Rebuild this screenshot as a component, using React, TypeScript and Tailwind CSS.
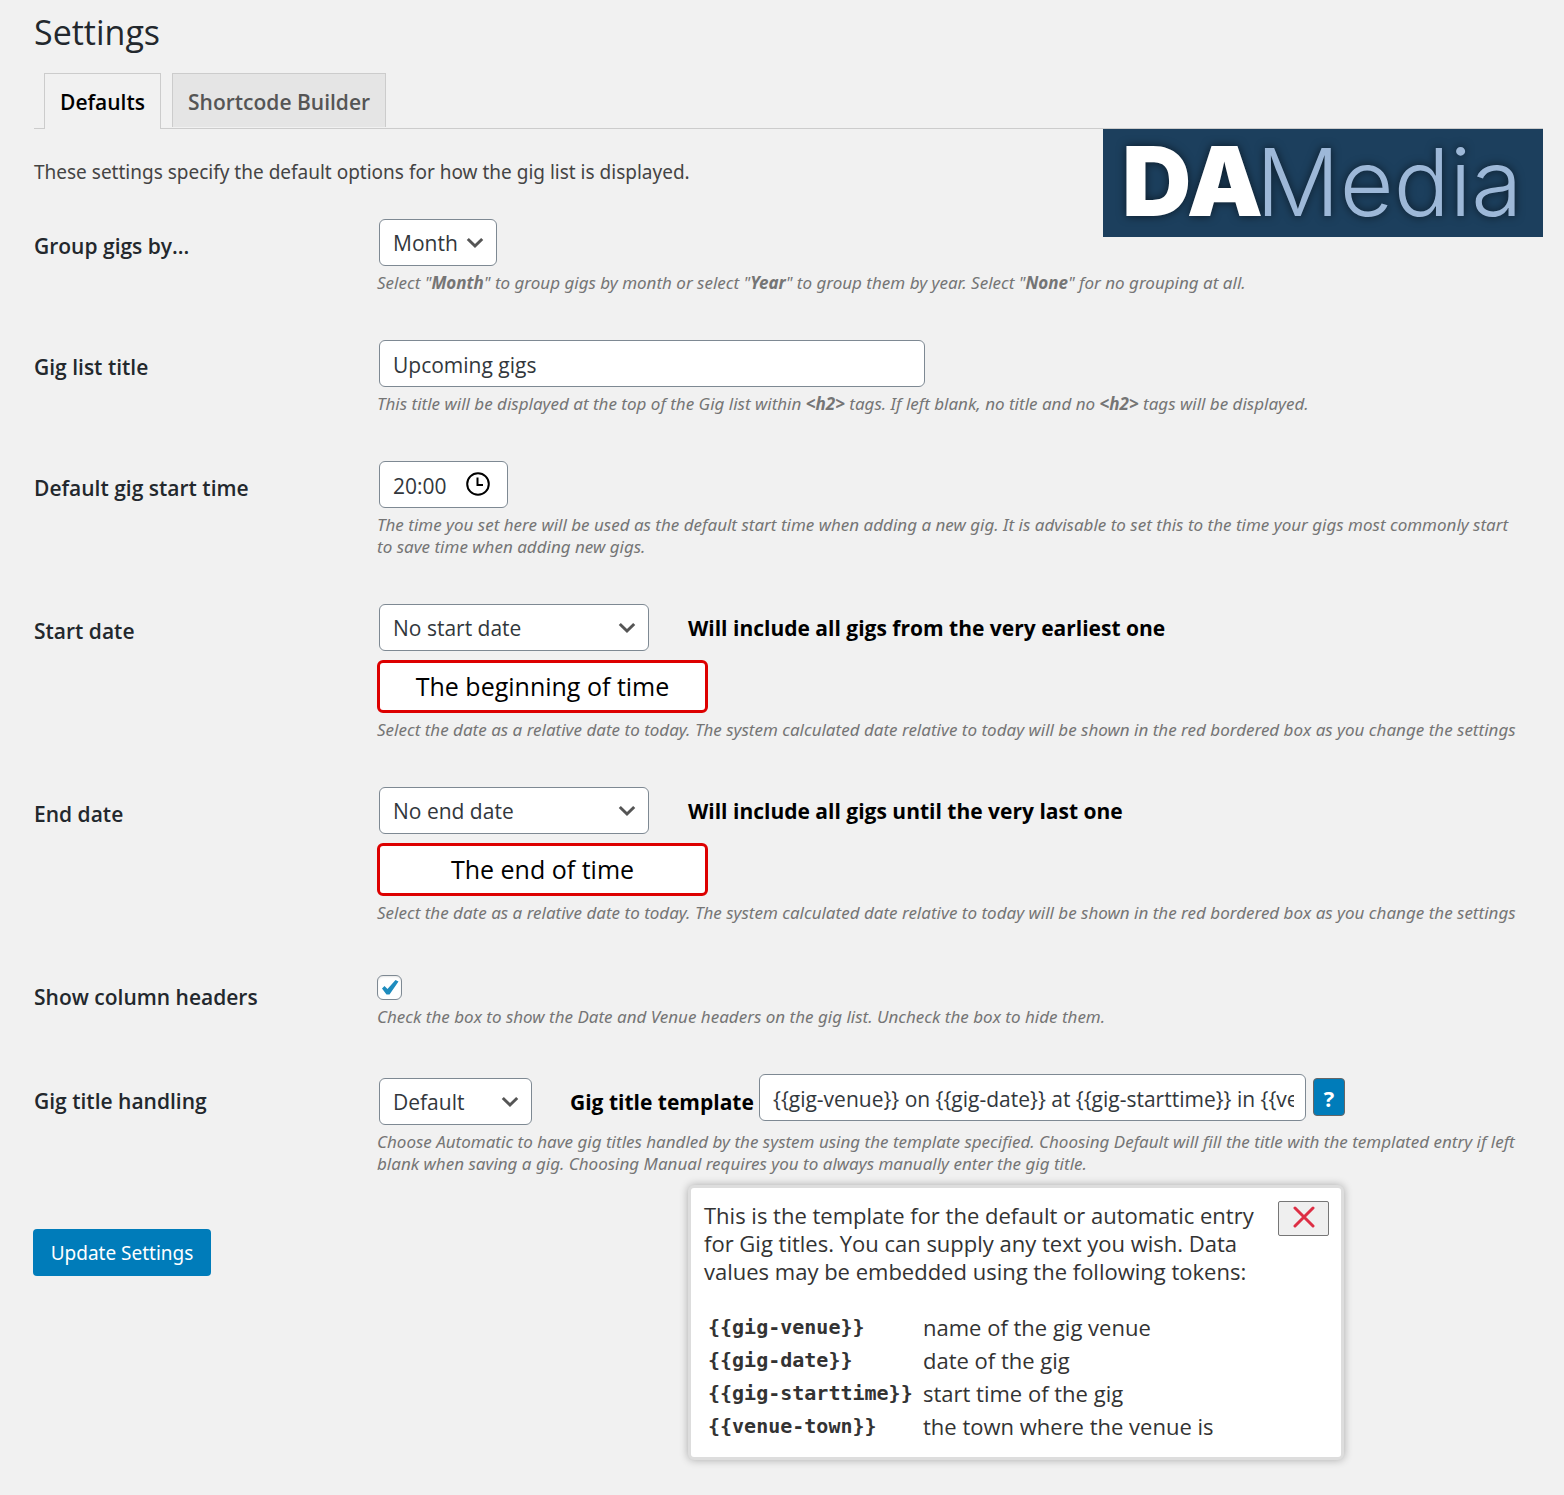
import type { ReactNode } from 'react';

const tokens = [
  { token: '{{gig-venue}}', text: 'name of the gig venue' },
  { token: '{{gig-date}}', text: 'date of the gig' },
  { token: '{{gig-starttime}}', text: 'start time of the gig' },
  { token: '{{venue-town}}', text: 'the town where the venue is' },
];

const fieldClass =
  'h-[47px] rounded-md border border-[#7e8993] bg-white pt-[2px] pr-[11px] pl-[13px] text-[21px] text-[#32373c]';

function Row({ id, label, children }: { id: string; label: string; children: ReactNode }) {
  return (
    <div className="mb-[46px] grid grid-cols-[343px_minmax(0,1fr)]">
      <label htmlFor={id} className="pt-3 text-[21px] leading-[30px] font-semibold">
        {label}
      </label>
      <div>{children}</div>
    </div>
  );
}

function Description({ children }: { children: ReactNode }) {
  return (
    <p className="mt-[6px] pr-5 font-['Noto_Sans',sans-serif] text-[17px] leading-[22px] text-[#757575] italic">
      {children}
    </p>
  );
}

function Select({ id, options, width }: { id: string; options: string[]; width: string }) {
  return (
    <div className={`relative ml-[2px] ${width}`}>
      <select id={id} className={`${fieldClass} w-full appearance-none`}>
        {options.map((option) => (
          <option key={option}>{option}</option>
        ))}
      </select>
      <svg
        aria-hidden
        viewBox="0 0 18 12"
        className="pointer-events-none absolute top-[18px] right-[13px] h-3 w-[18px]"
      >
        <path d="M1.8 2 L9 9 L16.2 2" fill="none" stroke="#555" strokeWidth="3" />
      </svg>
    </div>
  );
}

function DateBox({ id, children }: { id: string; children: ReactNode }) {
  return (
    <output
      htmlFor={id}
      className="mt-[9px] block h-[53px] w-[331px] rounded-md border-3 border-[#dd0000] bg-white text-center text-[25px] leading-[46px] text-black"
    >
      {children}
    </output>
  );
}

function Logo() {
  return (
    <svg
      role="img"
      aria-label="DAMedia"
      viewBox="0 0 440 108"
      className="absolute top-full right-0 mt-px h-[108px] w-[440px] overflow-visible bg-[#1c3f5d]"
    >
      <g
        fontFamily="Inter, sans-serif"
        className="drop-shadow-[0_0_5px_rgba(0,0,0,0.6)]"
      >
        <text x="19" y="87" fontSize="96" fontWeight="900" fill="#fff">
          DA
        </text>
        <text x="153" y="87" fontSize="93" fontWeight="300" fill="#9db8d8">
          Media
        </text>
      </g>
    </svg>
  );
}

function TemplateHelp() {
  return (
    <div className="absolute top-[111px] left-[311px] w-[656px] rounded-md border-3 border-[#ddd] bg-white px-3 pt-[13px] pb-[14px] text-[22px] text-[#333] shadow-[0_0_8px_rgba(0,0,0,0.3)]">
      <div className="flex items-start justify-between pl-px">
        <p className="w-[560px] leading-7">
          This is the template for the default or automatic entry for Gig titles. You can supply any
          text you wish. Data values may be embedded using the following tokens:
        </p>
        <button
          type="button"
          aria-label="Close"
          className="flex h-[35px] w-[51px] items-center justify-center rounded-xs border border-[#767676] bg-[#efefef]"
        >
          <svg viewBox="0 0 22 22" className="mb-[3px] h-[22px] w-[22px]">
            <path
              d="M2 2 L20 20 M20 2 L2 20"
              stroke="#dd2e44"
              strokeWidth="3"
              strokeLinecap="round"
            />
          </svg>
        </button>
      </div>
      <table className="mt-[26px] leading-[33px]">
        <tbody>
          {tokens.map(({ token, text }) => (
            <tr key={token}>
              <th
                scope="row"
                className="w-[220px] pl-[5px] text-left font-['DejaVu_Sans_Mono',monospace] text-xl leading-[33px] font-bold"
              >
                {token}
              </th>
              <td>{text}</td>
            </tr>
          ))}
        </tbody>
      </table>
    </div>
  );
}

export default function App() {
  return (
    <main className="min-h-screen bg-[#f1f1f1] pt-2 pr-[21px] pb-8 pl-[34px] font-['Open_Sans','Noto_Sans',sans-serif] text-[#23282d]">
      <h1 className="text-[34px] leading-[48px]">Settings</h1>

      <nav className="relative mt-[17px] flex items-start gap-[11px] border-b border-[#ccc] pl-[10px] text-[21px] font-semibold">
        <a
          href="#defaults"
          className="-mb-px flex h-14 items-center border border-b-0 border-[#ccc] bg-[#f1f1f1] px-[15px] pt-[2px] text-black"
        >
          Defaults
        </a>
        <a
          href="#shortcode"
          className="flex h-[54px] items-center border border-b-0 border-[#ccc] bg-[#e5e5e5] px-[15px] pt-1 text-[#555]"
        >
          Shortcode Builder
        </a>
        <Logo />
      </nav>

      <form>
        <p className="mt-[29px] mb-8 font-['Noto_Sans',sans-serif] text-[19px] leading-[29px] text-[#444]">
          These settings specify the default options for how the gig list is displayed.
        </p>

        <Row id="group" label="Group gigs by...">
          <Select id="group" options={['Month', 'Year', 'None']} width="w-[118px]" />
          <Description>
            Select "<b>Month</b>" to group gigs by month or select "<b>Year</b>" to group them by
            year. Select "<b>None</b>" for no grouping at all.
          </Description>
        </Row>

        <Row id="title" label="Gig list title">
          <input
            id="title"
            type="text"
            defaultValue="Upcoming gigs"
            className={`${fieldClass} ml-[2px] block w-[546px]`}
          />
          <Description>
            This title will be displayed at the top of the Gig list within <b>&lt;h2&gt;</b> tags.
            If left blank, no title and no <b>&lt;h2&gt;</b> tags will be displayed.
          </Description>
        </Row>

        <Row id="time" label="Default gig start time">
          <div className="relative ml-[2px] w-[129px]">
            <input
              id="time"
              type="text"
              inputMode="numeric"
              defaultValue="20:00"
              className={`${fieldClass} block w-full`}
            />
            <svg
              aria-hidden
              viewBox="0 0 24 24"
              className="absolute top-[11px] right-[18px] h-6 w-6"
            >
              <circle cx="12" cy="12" r="10.8" fill="none" stroke="#000" strokeWidth="2" />
              <path d="M11.5 5.5 V13 H17" fill="none" stroke="#000" strokeWidth="2" />
            </svg>
          </div>
          <Description>
            The time you set here will be used as the default start time when adding a new gig. It
            is advisable to set this to the time your gigs most commonly start to save time when
            adding new gigs.
          </Description>
        </Row>

        <Row id="start" label="Start date">
          <div className="flex items-center gap-[39px]">
            <Select id="start" options={['No start date']} width="w-[270px]" />
            <strong className="pt-[2px] text-[21px] font-bold text-black">
              Will include all gigs from the very earliest one
            </strong>
          </div>
          <DateBox id="start">The beginning of time</DateBox>
          <Description>
            Select the date as a relative date to today. The system calculated date relative to
            today will be shown in the red bordered box as you change the settings
          </Description>
        </Row>

        <Row id="end" label="End date">
          <div className="flex items-center gap-[39px]">
            <Select id="end" options={['No end date']} width="w-[270px]" />
            <strong className="pt-[2px] text-[21px] font-bold text-black">
              Will include all gigs until the very last one
            </strong>
          </div>
          <DateBox id="end">The end of time</DateBox>
          <Description>
            Select the date as a relative date to today. The system calculated date relative to
            today will be shown in the red bordered box as you change the settings
          </Description>
        </Row>

        <Row id="headers" label="Show column headers">
          <div className="relative mt-[5px] h-[25px] w-[25px]">
            <input
              id="headers"
              type="checkbox"
              defaultChecked
              className="peer block h-full w-full appearance-none rounded-md border border-[#7e8993] bg-white shadow-[inset_0_1px_2px_rgba(0,0,0,0.1)]"
            />
            <svg
              aria-hidden
              viewBox="0 0 25 25"
              className="pointer-events-none absolute inset-0 hidden peer-checked:block"
            >
              <path d="M5 13.5 L7.5 11 L10.5 14 L18.5 5 L21.5 6.5 L12.5 19.5 H9.5 Z" fill="#1e8cbe" />
            </svg>
          </div>
          <Description>
            Check the box to show the Date and Venue headers on the gig list. Uncheck the box to
            hide them.
          </Description>
        </Row>

        <Row id="handling" label="Gig title handling">
          <div className="relative">
            <div className="flex items-start">
              <div className="pt-1">
                <Select
                  id="handling"
                  options={['Default', 'Automatic', 'Manual']}
                  width="w-[153px]"
                />
              </div>
              <label
                htmlFor="template"
                className="ml-[38px] w-[189px] pt-[13px] text-[21px] leading-[30px] font-bold whitespace-nowrap text-black"
              >
                Gig title template
              </label>
              <input
                id="template"
                type="text"
                defaultValue="{{gig-venue}} on {{gig-date}} at {{gig-starttime}} in {{venue-town}}"
                className={`${fieldClass} w-[547px]`}
              />
              <button
                type="button"
                className="mt-1 ml-[7px] h-[38px] w-8 rounded-sm border border-[#666] bg-[#007cba] pt-[2px] text-[22px] leading-7 font-bold text-white"
              >
                ?
              </button>
            </div>
            <TemplateHelp />
          </div>
          <Description>
            Choose Automatic to have gig titles handled by the system using the template specified.
            Choosing Default will fill the title with the templated entry if left blank when saving
            a gig. Choosing Manual requires you to always manually enter the gig title.
          </Description>
        </Row>

        <button
          type="submit"
          className="mt-2 -ml-px h-[47px] w-[178px] rounded bg-[#007cba] pt-[2px] font-['Noto_Sans',sans-serif] text-[19px] text-white"
        >
          Update Settings
        </button>
      </form>
    </main>
  );
}
